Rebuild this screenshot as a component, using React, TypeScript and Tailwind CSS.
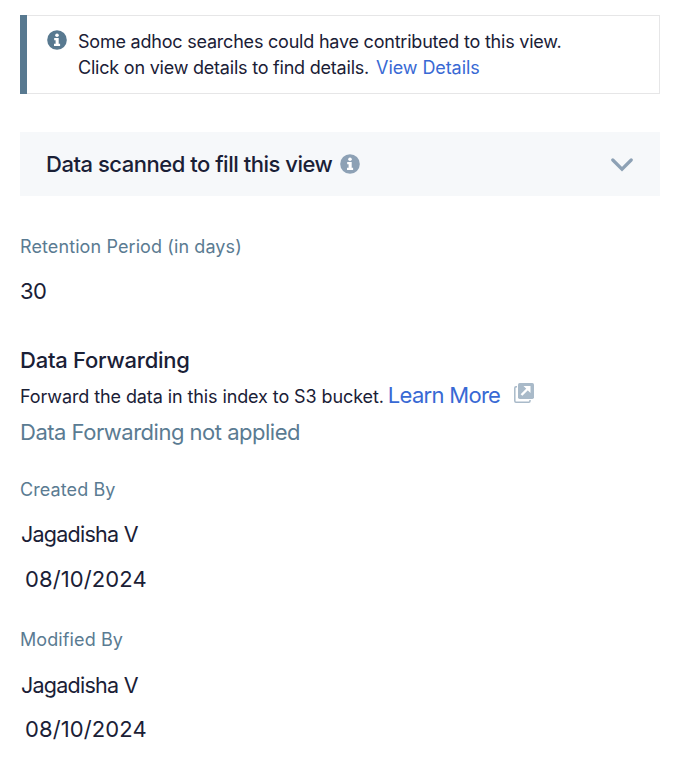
import React from "react";

function Info({ className }: { className: string }) {
  return (
    <svg width="20" height="20" viewBox="0 0 20 20" className={className}>
      <circle cx="10" cy="10" r="9.8" fill="currentColor" />
      <circle cx="10" cy="5.2" r="1.8" fill="#fff" />
      <path d="M7.2 8.1h4.5v5.7h1.4v2.1H7v-2.1h1.6v-3.6H7.2z" fill="#fff" />
    </svg>
  );
}

function Person({ label, name, date, nameGap, dateGap }: { label: string; name: string; date: string; nameGap: string; dateGap: string }) {
  return (
    <section>
      <h3 className="text-[18px] leading-[30px] tracking-[0.1px] text-[#5a7b92]">{label}</h3>
      <p className={"pl-px text-[21.5px] leading-[30px] tracking-[-0.75px] " + nameGap}>{name}</p>
      <p className={"pl-[5px] text-[22px] leading-[30px] tracking-[0.1px] " + dateGap}>{date}</p>
    </section>
  );
}

export default function App() {
  return (
    <main className="h-[772px] w-[678px] overflow-hidden bg-white px-5 pt-[15px] font-['Inter','Liberation_Sans',sans-serif] text-[#1a2036]">
      <section className="flex h-[79px] w-[640px]">
        <div className="w-[7px] shrink-0 bg-[#587990]" />
        <div className="flex grow border border-l-0 border-[#e6e6e7] pl-5 pt-[13px]">
          <Info className="mt-[1px] shrink-0 text-[#587990]" />
          <div className="ml-[11px] text-[18px] leading-[26px] tracking-[-0.215px]">
            <p>Some adhoc searches could have contributed to this view.</p>
            <p>
              Click on view details to find details.
              <a className="ml-[7px] tracking-[-0.08px] text-[#3869d4]">View Details</a>
            </p>
          </div>
        </div>
      </section>

      <section className="mt-[38px] flex h-16 w-[640px] items-center bg-[#f6f8fa] pl-[26px] pr-[27px]">
        <h2 className="text-[22px] font-medium leading-[30px] tracking-[-0.48px]">Data scanned to fill this view</h2>
        <Info className="ml-2 shrink-0 text-[#8da1b5]" />
        <svg width="22" height="14" viewBox="0 0 22 14" className="ml-auto mt-[2px]" fill="none" stroke="#8da1b5" strokeWidth="3.2" strokeLinecap="round" strokeLinejoin="miter">
          <path d="M1.8 2 11 11.2 20.2 2" />
        </svg>
      </section>

      <section className="mt-[36px]">
        <h3 className="text-[18px] leading-[30px] tracking-[0.1px] text-[#5a7b92]">Retention Period (in days)</h3>
        <p className="mt-[14px] text-[22px] leading-[30px] tracking-[-0.5px]">30</p>
      </section>

      <section className="mb-[28px] mt-[39px]">
        <h2 className="text-[22px] font-medium leading-[30px] tracking-[-0.24px]">Data Forwarding</h2>
        <div className="mt-[5px] flex h-[30px] items-baseline leading-[30px]">
          <p className="text-[18px] tracking-[-0.1px]">Forward the data in this index to S3 bucket.</p>
          <a className="ml-[4px] text-[22px] tracking-[-0.7px] text-[#3869d4]">Learn More</a>
          <svg width="20" height="20" viewBox="0 0 20 20" className="ml-[14px] mt-[3px] self-start">
            <path d="M3 3.8H2A1.200 1.200 0 0 0 .8 5V18A1.200 1.200 0 0 0 2 19.200H14.800A1.200 1.200 0 0 0 16 18V17" fill="none" stroke="#a9bac9" strokeWidth="1.500" />
            <rect x="4" y="0" width="16" height="16" rx="1.700" fill="#a9bac9" />
            <path d="M7.500 12 14 5.500" fill="none" stroke="#fff" strokeWidth="2.400" />
            <path d="M9.500 3H16.500V10L14.200 7.700 11.800 5.300Z" fill="#fff" />
          </svg>
        </div>
        <p className="mt-[7px] text-[22px] leading-[30px] tracking-[-0.5px] text-[#5a7b92]">Data Forwarding not applied</p>
      </section>

      <Person label="Created By" name="Jagadisha V" date="08/10/2024" nameGap="mt-[14px]" dateGap="mt-[15px]" />
      <div className="h-[31px]" />
      <Person label="Modified By" name="Jagadisha V" date="08/10/2024" nameGap="mt-[15px]" dateGap="mt-[14px]" />
    </main>
  );
}
